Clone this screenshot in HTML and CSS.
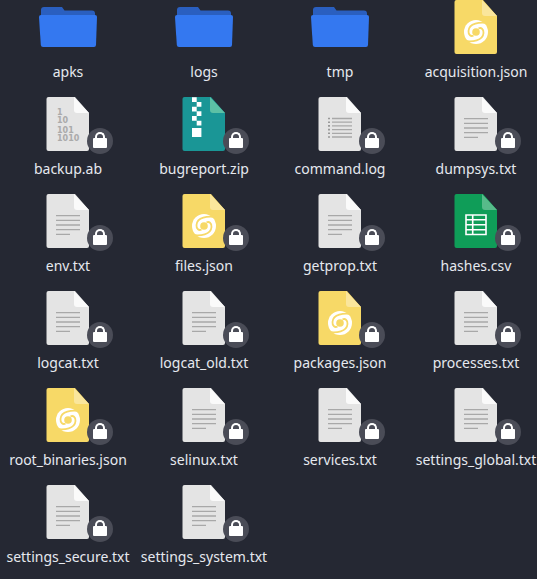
FILE: index.html
```html
<!DOCTYPE html>
<html lang="en">
<head>
  <meta charset="UTF-8" />
  <title>Files</title>
  <link rel="stylesheet" href="styles.css">
</head>
<body>
  <svg class="defs" width="0" height="0">
    <symbol id="folder" viewBox="0 0 64 64">
      <path d="M5 15 a3 3 0 0 1 3-3 h18 l2.500 3.500 H56 a3 3 0 0 1 3 3 V32 H5z" fill="#2a5fc0"/>
      <path d="M3 22 Q3 20 5 20 H59 Q61 20 61 22 L60 50 Q59.900 52 58 52 H7 Q5 52 4.800 50z" fill="#3478f0"/>
    </symbol>
    <symbol id="file-base" viewBox="0 0 64 64">
      <path d="M12.500 5 H39 L53 21 V57 a2 2 0 0 1-2 2 H12.500 a2 2 0 0 1-2-2 V7 a2 2 0 0 1 2-2z" fill="#e4e4e4"/>
      <path d="M38 5 L53 21 H41 a3 3 0 0 1-3-3z" fill="#fafafa"/>
    </symbol>
    <symbol id="text" viewBox="0 0 64 64">
      <use href="#file-base"/>
      <path d="M20 26.700h24M20 31.300h24M20 36h24M20 40.700h24M20 45.300h14" stroke="#a8a8a8" stroke-width="1.300"/>
    </symbol>
    <symbol id="log" viewBox="0 0 64 64">
      <use href="#file-base"/>
      <path d="M24 26.500h20M24 30.200h20M24 33.900h20M24 37.600h20M24 41.300h20M24 45h20" stroke="#a8a8a8" stroke-width="1.300"/>
      <path d="M20 26.500h2M20 30.200h2M20 33.900h2M20 37.600h2M20 41.300h2M20 45h2" stroke="#999" stroke-width="1.600"/>
    </symbol>
    <symbol id="zip" viewBox="0 0 64 64">
      <path d="M12.500 5 H39 L53 21 V57 a2 2 0 0 1-2 2 H12.500 a2 2 0 0 1-2-2 V7 a2 2 0 0 1 2-2z" fill="#1a9696"/>
      <path d="M38 5 L53 21 H41 a3 3 0 0 1-3-3z" fill="#5cc0a5"/>
      <path d="M20 5.300h4.700v4.700H20zM24.700 10h4.700v4.700h-4.700zM20 14.700h4.700v4.700H20zM24.700 19.300h4.700v4.700h-4.700zM20 24h4.700v4.700H20zM24.700 28.700h4.700v4.700h-4.700zM20 36h9.400v9H20z" fill="#fff"/>
    </symbol>
    <symbol id="json" viewBox="0 0 64 64">
      <path d="M12.500 5 H39 L53 21 V57 a2 2 0 0 1-2 2 H12.500 a2 2 0 0 1-2-2 V7 a2 2 0 0 1 2-2z" fill="#f7d967"/>
      <path d="M38 5 L53 21 H41 a3 3 0 0 1-3-3z" fill="#fae69c"/>
      <g transform="translate(32 37)">
        <circle r="12" fill="#fff"/>
        <circle r="3.800" fill="#f7d967"/>
        <g fill="none" stroke="#f7d967" stroke-width="1.800">
          <path d="M11 -9 C4 -10 -7 -9 -7.500 -1 C-7.800 3 -5 5 -2.500 3.500"/>
          <path d="M-11 9 C-4 10 7 9 7.500 1 C7.800 -3 5 -5 2.500 -3.500"/>
        </g>
      </g>
    </symbol>
    <symbol id="sheet" viewBox="0 0 64 64">
      <path d="M12.500 5 H39 L53 21 V57 a2 2 0 0 1-2 2 H12.500 a2 2 0 0 1-2-2 V7 a2 2 0 0 1 2-2z" fill="#0f9d58"/>
      <path d="M38 5 L53 21 H41 a3 3 0 0 1-3-3z" fill="#57bb8a"/>
      <path d="M22 26h20v19.500H22zM22 30.700h20M22 35.700h20M22 40.700h20M28.700 26v19.500" fill="none" stroke="#fff" stroke-width="1.600"/>
    </symbol>
  </svg>

  <div class="grid">
    <div class="item"><svg class="icon"><use href="#folder"/></svg><span class="name">apks</span></div>
    <div class="item"><svg class="icon"><use href="#folder"/></svg><span class="name">logs</span></div>
    <div class="item"><svg class="icon"><use href="#folder"/></svg><span class="name">tmp</span></div>
    <div class="item"><svg class="icon"><use href="#json"/></svg><span class="name">acquisition.json</span></div>

    <div class="item locked">
      <svg class="icon" viewBox="0 0 64 64">
        <use href="#file-base" width="64" height="64"/>
        <g class="bits">
          <text x="21" y="23">1</text>
          <text x="21" y="31">10</text>
          <text x="21" y="41">101</text>
          <text x="21" y="49">1010</text>
        </g>
      </svg>
      <span class="name">backup.ab</span>
    </div>
    <div class="item locked"><svg class="icon"><use href="#zip"/></svg><span class="name">bugreport.zip</span></div>
    <div class="item locked"><svg class="icon"><use href="#log"/></svg><span class="name">command.log</span></div>
    <div class="item locked"><svg class="icon"><use href="#text"/></svg><span class="name">dumpsys.txt</span></div>

    <div class="item locked"><svg class="icon"><use href="#text"/></svg><span class="name">env.txt</span></div>
    <div class="item locked"><svg class="icon"><use href="#json"/></svg><span class="name">files.json</span></div>
    <div class="item locked"><svg class="icon"><use href="#text"/></svg><span class="name">getprop.txt</span></div>
    <div class="item locked"><svg class="icon"><use href="#sheet"/></svg><span class="name">hashes.csv</span></div>

    <div class="item locked"><svg class="icon"><use href="#text"/></svg><span class="name">logcat.txt</span></div>
    <div class="item locked"><svg class="icon"><use href="#text"/></svg><span class="name">logcat_old.txt</span></div>
    <div class="item locked"><svg class="icon"><use href="#json"/></svg><span class="name">packages.json</span></div>
    <div class="item locked"><svg class="icon"><use href="#text"/></svg><span class="name">processes.txt</span></div>

    <div class="item locked"><svg class="icon"><use href="#json"/></svg><span class="name">root_binaries.json</span></div>
    <div class="item locked"><svg class="icon"><use href="#text"/></svg><span class="name">selinux.txt</span></div>
    <div class="item locked"><svg class="icon"><use href="#text"/></svg><span class="name">services.txt</span></div>
    <div class="item locked"><svg class="icon"><use href="#text"/></svg><span class="name">settings_global.txt</span></div>

    <div class="item locked"><svg class="icon"><use href="#text"/></svg><span class="name">settings_secure.txt</span></div>
    <div class="item locked"><svg class="icon"><use href="#text"/></svg><span class="name">settings_system.txt</span></div>
  </div>
</body>
</html>
```

FILE: styles.css
```css
html, body {
  margin: 0;
  height: 100%;
  overflow: hidden;
  background: #252833;
}

.defs {
  position: absolute;
}

.grid {
  display: grid;
  grid-template-columns: repeat(4, 120px);
  grid-auto-rows: 97px;
  column-gap: 16px;
  padding-left: 8px;
  margin-top: -5px; /* view is scrolled a little */
  font-family: "Noto Sans", sans-serif;
  font-size: 14px;
  color: #e6e9ef;
}

.item {
  position: relative;
  display: flex;
  flex-direction: column;
  align-items: center;
}

.icon {
  width: 64px;
  height: 64px;
  flex: none;
}

.name {
  margin-top: 3px;
  line-height: 20px;
  white-space: nowrap;
}

.bits text {
  font-family: "DejaVu Sans", sans-serif;
  font-weight: 700;
  font-size: 8px;
  fill: #aaa;
}

/* lock badge */
.locked::before {
  content: "";
  position: absolute;
  left: 79px;
  top: 36px;
  width: 26px;
  height: 26px;
  border-radius: 50%;
  background: #4a4c57;
}

.locked::after {
  content: "";
  position: absolute;
  left: 85px;
  top: 46px;
  width: 14px;
  height: 9.5px;
  border-radius: 1px;
  background: #fff;
}

.locked .name::before {
  content: "";
  position: absolute;
  left: 87px;
  top: 40px;
  width: 6px;
  height: 8px;
  border: 2px solid #fff;
  border-bottom: none;
  border-radius: 5px 5px 0 0;
}
```
